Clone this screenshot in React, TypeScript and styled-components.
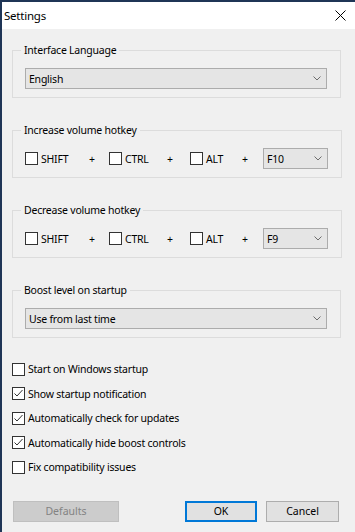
import React from 'react'
import styled, { createGlobalStyle } from 'styled-components'

const GlobalStyle = createGlobalStyle`
  html, body {
    margin: 0;
    padding: 0;
    background: #f0f0f0;
  }
  body {
    font-family: 'Noto Sans', 'Liberation Sans', sans-serif;
    font-size: 10.5px;
    letter-spacing: -0.22px;
    color: #000;
  }
`

const Window = styled.div`
  width: 355px;
  height: 532px;
  box-sizing: border-box;
  border-top: 2px solid #1f3556;
  border-left: 2px solid #1f3556;
  background: #f0f0f0;
  display: flex;
  flex-direction: column;
  overflow: hidden;
`

const TitleBar = styled.div`
  height: 27px;
  flex: none;
  background: #fff;
  display: flex;
  align-items: center;
  justify-content: space-between;
  padding: 0 9px 0 2px;
  font-size: 11.5px;
`

const CloseButton = styled.button`
  border: 0;
  background: none;
  padding: 0;
  width: 11px;
  height: 11px;
  display: flex;
  cursor: pointer;
`

const Body = styled.div`
  flex: 1;
  padding: 14px 14px 0 10px;
  display: flex;
  flex-direction: column;
`

const Group = styled.fieldset`
  margin: 0;
  border: 1px solid #dcdcdc;
  padding: 11px 13px 8px 12px;
  & + & {
    margin-top: 25px;
  }
`

const Legend = styled.legend`
  padding: 0 3px;
  margin-left: -4px;
  line-height: 14px;
`

const Combo = styled.div<{ $w?: number }>`
  box-sizing: border-box;
  height: 21px;
  width: ${(p) => (p.$w ? `${p.$w}px` : 'auto')};
  background: #e5e5e5;
  border: 1px solid #acacac;
  display: flex;
  align-items: center;
  justify-content: space-between;
  padding: 0 5px 0 3px;
  flex: none;
`

const Chevron = () => (
  <svg width="8" height="5" viewBox="0 0 8 5">
    <path d="M0.5 0.5 L4 4 L7.5 0.5" fill="none" stroke="#6d6d6d" strokeWidth="1" />
  </svg>
)

const Select = ({ value, width }: { value: string; width?: number }) => (
  <Combo $w={width} role="combobox">
    <span>{value}</span>
    <Chevron />
  </Combo>
)

const HotkeyRow = styled.div`
  display: flex;
  align-items: center;
  height: 21px;
`

const Box = styled.span`
  box-sizing: border-box;
  width: 13px;
  height: 13px;
  border: 1px solid #333;
  background: #fff;
  flex: none;
  display: flex;
`

const CheckLabel = styled.label<{ $w?: number }>`
  display: flex;
  align-items: center;
  gap: 3px;
  width: ${(p) => (p.$w ? `${p.$w}px` : 'auto')};
  flex: none;
`

const Plus = styled.span<{ $w: number }>`
  width: ${(p) => p.$w}px;
  flex: none;
`

const Check = ({ checked, label, width }: { checked?: boolean; label: string; width?: number }) => (
  <CheckLabel $w={width}>
    <Box>
      {checked && (
        <svg width="11" height="11" viewBox="0 0 11 11">
          <path d="M1.5 5.5 L4 8 L9.5 2" fill="none" stroke="#333" strokeWidth="1" />
        </svg>
      )}
    </Box>
    <span>{label}</span>
  </CheckLabel>
)

const Options = styled.div`
  margin-top: 19px;
  display: flex;
  flex-direction: column;
`

const OptionRow = styled.div`
  height: 24.5px;
  display: flex;
  align-items: center;
`

const Buttons = styled.div`
  margin-top: 21px;
  display: flex;
  padding: 0 2px 0 1px;
  gap: 9px;
`

const Button = styled.button<{ $w: number; $default?: boolean }>`
  box-sizing: border-box;
  width: ${(p) => p.$w}px;
  height: 21px;
  font: inherit;
  color: #000;
  background: #e1e1e1;
  border: 1px solid ${(p) => (p.$default ? '#0078d7' : '#adadad')};
  box-shadow: ${(p) => (p.$default ? 'inset 0 0 0 1px #0078d7' : 'none')};
  padding: 0;
  &:first-child {
    margin-right: auto;
  }
  &:disabled {
    background: #cccccc;
    border-color: #bfbfbf;
    color: #838383;
  }
`

const Hotkey = ({ title, keyName }: { title: string; keyName: string }) => (
  <Group>
    <Legend>{title}</Legend>
    <HotkeyRow>
      <Check label="SHIFT" width={64} />
      <Plus $w={20}>+</Plus>
      <Check label="CTRL" width={58} />
      <Plus $w={23}>+</Plus>
      <Check label="ALT" width={52} />
      <Plus $w={21}>+</Plus>
      <Select value={keyName} width={65} />
    </HotkeyRow>
  </Group>
)

const options = [
  { label: 'Start on Windows startup', checked: false },
  { label: 'Show startup notification', checked: true },
  { label: 'Automatically check for updates', checked: true },
  { label: 'Automatically hide boost controls', checked: true },
  { label: 'Fix compatibility issues', checked: false },
]

export default function App() {
  return (
    <>
      <GlobalStyle />
      <Window>
        <TitleBar>
          <span>Settings</span>
          <CloseButton aria-label="Close">
            <svg width="11" height="11" viewBox="0 0 11 11">
              <path d="M0.5 0.5 L10.5 10.5 M10.5 0.5 L0.5 10.5" stroke="#000" strokeWidth="1" />
            </svg>
          </CloseButton>
        </TitleBar>
        <Body>
          <Group>
            <Legend>Interface Language</Legend>
            <Select value="English" />
          </Group>
          <Hotkey title="Increase volume hotkey" keyName="F10" />
          <Hotkey title="Decrease volume hotkey" keyName="F9" />
          <Group>
            <Legend>Boost level on startup</Legend>
            <Select value="Use from last time" />
          </Group>
          <Options>
            {options.map((o) => (
              <OptionRow key={o.label}>
                <Check label={o.label} checked={o.checked} />
              </OptionRow>
            ))}
          </Options>
          <Buttons>
            <Button $w={106} disabled>
              Defaults
            </Button>
            <Button $w={72} $default>
              OK
            </Button>
            <Button $w={73}>Cancel</Button>
          </Buttons>
        </Body>
      </Window>
    </>
  )
}
